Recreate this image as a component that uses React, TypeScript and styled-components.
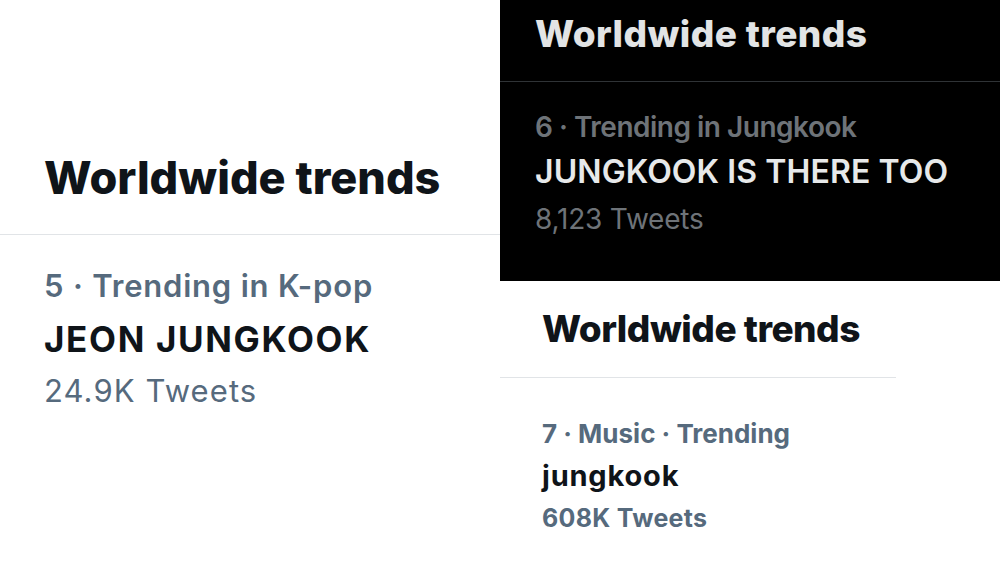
import React from "react";
import styled, { createGlobalStyle } from "styled-components";

const GlobalStyle = createGlobalStyle`
  html, body {
    margin: 0;
    padding: 0;
    background: #ffffff;
  }
  body {
    font-family: Inter, "Liberation Sans", Arial, sans-serif;
    -webkit-font-smoothing: antialiased;
  }
`;

type Tone = "light" | "dark";

interface TextSpec {
  size: number;
  lh: number;
  gap: number;
  weight: number;
  spacing: number;
}

interface CardSpec {
  tone: Tone;
  width: number;
  height: number;
  inset: number;
  title: { size: number; lh: number; top: number; bottom: number; weight: number; spacing: number };
  meta: TextSpec;
  name: TextSpec;
  count: TextSpec;
  dividerWidth: number;
  metaText: string;
  nameText: string;
  countText: string;
}

const palette = {
  light: { bg: "#ffffff", title: "#0f1419", name: "#0f1419", muted: "#566a7d", rule: "#e1e4e7" },
  dark: { bg: "#000000", title: "#e2e4e5", name: "#e7e9ea", muted: "#6e7378", rule: "#2f3336" },
};

const Collage = styled.main`
  width: 1000px;
  height: 563px;
  display: grid;
  grid-template-columns: 500px 500px;
  overflow: hidden;
  background: #ffffff;
`;

const Column = styled.section`
  display: flex;
  flex-direction: column;
  gap: 1px;
  background: #ffffff;
`;

const Panel = styled.article<{ $tone: Tone; $width: number; $height: number }>`
  box-sizing: border-box;
  width: ${(p) => p.$width}px;
  height: ${(p) => p.$height}px;
  background: ${(p) => palette[p.$tone].bg};
  display: flex;
  flex-direction: column;
  flex: none;
`;

const Header = styled.h2<{
  $tone: Tone;
  $size: number;
  $lh: number;
  $top: number;
  $bottom: number;
  $inset: number;
  $weight: number;
  $spacing: number;
}>`
  margin: 0;
  padding: ${(p) => p.$top}px ${(p) => p.$inset}px ${(p) => p.$bottom}px;
  font-size: ${(p) => p.$size}px;
  line-height: ${(p) => p.$lh}px;
  font-weight: ${(p) => p.$weight};
  letter-spacing: ${(p) => p.$spacing}px;
  color: ${(p) => palette[p.$tone].title};
  white-space: nowrap;
`;

const Rule = styled.div<{ $tone: Tone; $width: number }>`
  width: ${(p) => p.$width}px;
  height: 1px;
  background: ${(p) => palette[p.$tone].rule};
  flex: none;
`;

const Trend = styled.div<{ $inset: number; $top: number }>`
  display: flex;
  flex-direction: column;
  padding: ${(p) => p.$top}px ${(p) => p.$inset}px 0;
`;

const Line = styled.div<{
  $size: number;
  $lh: number;
  $gap: number;
  $weight: number;
  $spacing: number;
  $color: string;
}>`
  margin-top: ${(p) => p.$gap}px;
  font-size: ${(p) => p.$size}px;
  line-height: ${(p) => p.$lh}px;
  font-weight: ${(p) => p.$weight};
  letter-spacing: ${(p) => p.$spacing}px;
  color: ${(p) => p.$color};
  white-space: nowrap;
`;

const cards: Record<string, CardSpec> = {
  left: {
    tone: "light",
    width: 500,
    height: 563,
    inset: 44,
    dividerWidth: 500,
    title: { size: 45, lh: 54, top: 151, bottom: 29, weight: 800, spacing: 0 },
    meta: { size: 31, lh: 36, gap: 33, weight: 600, spacing: 0.8 },
    name: { size: 35, lh: 40, gap: 15, weight: 700, spacing: 1.65 },
    count: { size: 31, lh: 36, gap: 14, weight: 400, spacing: 1.1 },
    metaText: "5 · Trending in K-pop",
    nameText: "JEON JUNGKOOK",
    countText: "24.9K Tweets",
  },
  dark: {
    tone: "dark",
    width: 500,
    height: 281,
    inset: 35,
    dividerWidth: 500,
    title: { size: 37, lh: 44, top: 12, bottom: 25, weight: 800, spacing: 0.4 },
    meta: { size: 28, lh: 34, gap: 28, weight: 600, spacing: -0.5 },
    name: { size: 32, lh: 38, gap: 9, weight: 600, spacing: 0.1 },
    count: { size: 28, lh: 34, gap: 11, weight: 400, spacing: -0.2 },
    metaText: "6 · Trending in Jungkook",
    nameText: "JUNGKOOK IS THERE TOO",
    countText: "8,123 Tweets",
  },
  bottom: {
    tone: "light",
    width: 500,
    height: 281,
    inset: 42,
    dividerWidth: 396,
    title: { size: 37, lh: 44, top: 25, bottom: 26, weight: 800, spacing: -0.5 },
    meta: { size: 26, lh: 32, gap: 40, weight: 700, spacing: 0 },
    name: { size: 29, lh: 32, gap: 10, weight: 700, spacing: 0.8 },
    count: { size: 25, lh: 30, gap: 11, weight: 700, spacing: 0.3 },
    metaText: "7 · Music · Trending",
    nameText: "jungkook",
    countText: "608K Tweets",
  },
};

function TrendLine({ spec, color, children }: { spec: TextSpec; color: string; children: React.ReactNode }) {
  return (
    <Line
      $size={spec.size}
      $lh={spec.lh}
      $gap={spec.gap}
      $weight={spec.weight}
      $spacing={spec.spacing}
      $color={color}
    >
      {children}
    </Line>
  );
}

function TrendCard({ spec }: { spec: CardSpec }) {
  const c = palette[spec.tone];
  return (
    <Panel $tone={spec.tone} $width={spec.width} $height={spec.height}>
      <Header
        $tone={spec.tone}
        $size={spec.title.size}
        $lh={spec.title.lh}
        $top={spec.title.top}
        $bottom={spec.title.bottom}
        $inset={spec.inset}
        $weight={spec.title.weight}
        $spacing={spec.title.spacing}
      >
        Worldwide trends
      </Header>
      <Rule $tone={spec.tone} $width={spec.dividerWidth} />
      <Trend $inset={spec.inset} $top={spec.meta.gap}>
        <TrendLine spec={{ ...spec.meta, gap: 0 }} color={c.muted}>
          {spec.metaText}
        </TrendLine>
        <TrendLine spec={spec.name} color={c.name}>
          {spec.nameText}
        </TrendLine>
        <TrendLine spec={spec.count} color={c.muted}>
          {spec.countText}
        </TrendLine>
      </Trend>
    </Panel>
  );
}

export default function App() {
  return (
    <>
      <GlobalStyle />
      <Collage>
        <TrendCard spec={cards.left} />
        <Column>
          <TrendCard spec={cards.dark} />
          <TrendCard spec={cards.bottom} />
        </Column>
      </Collage>
    </>
  );
}
